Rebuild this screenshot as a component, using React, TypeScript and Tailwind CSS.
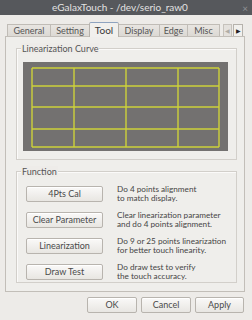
const tabs = [
  { name: "General", w: "w-[44px]" },
  { name: "Setting", w: "w-[40px]" },
  { name: "Tool", w: "w-[30px]" },
  { name: "Display", w: "w-[42px]" },
  { name: "Edge", w: "w-[29px]" },
  { name: "Misc", w: "w-[33px]" },
];

const functions = [
  { label: "4Pts Cal", text: ["Do 4 points alignment", "to match display."] },
  { label: "Clear Parameter", text: ["Clear linearization parameter", "and do 4 points alignment."] },
  { label: "Linearization", text: ["Do 9 or 25 points linearization", "for better touch linearity."] },
  { label: "Draw Test", text: ["Do draw test to verify", "the touch accuracy."] },
];

const xs = [9, 51, 103, 155, 196];
const ys = [6, 24, 45, 67, 85];

function Button({ children, className }: { children: React.ReactNode; className?: string }) {
  return (
    <div
      className={`flex items-center justify-center border border-[#b8b4ae] rounded-[2px] bg-gradient-to-b from-[#faf9f8] to-[#e8e6e2] text-[9px] text-[#4a4a4a] shadow-[inset_0_1px_0_#fff] ${className ?? ""}`}
    >
      {children}
    </div>
  );
}

function Group({ title, className, children }: { title: string; className?: string; children: React.ReactNode }) {
  return (
    <div className={`relative border border-[#d2cfca] shadow-[inset_1px_1px_0_#fbfaf9] ${className ?? ""}`}>
      <span className="absolute left-[4px] top-[-6px] px-[1px] bg-[#eeece9] text-[9px] leading-[11px] text-[#555]">
        {title}
      </span>
      {children}
    </div>
  );
}

export default function App() {
  return (
    <div className="w-[252px] h-[320px] bg-[#edebe8] flex flex-col font-['Lato',sans-serif] overflow-hidden">
      <div className="relative h-[15px] bg-[#56585c] flex items-center justify-center pr-[12px] text-[10px] text-[#e2e2e2]">
        eGalaxTouch - /dev/serio_raw0
        <span className="absolute right-[4px] top-[1px] text-[10px] text-[#8e9094]">×</span>
      </div>

      <div className="flex items-end h-[21px] pl-[7px]">
        {tabs.map((t) =>
          t.name === "Tool" ? (
            <div
              key={t.name}
              className={`${t.w} h-[15px] -ml-[1px] flex items-center justify-center border border-b-0 border-[#b6b2ac] border-t-[#8ea3bf] bg-[#f1f0ed] text-[10px] text-[#3a3a3a] rounded-t-[2px] -mb-[1px] z-10`}
            >
              {t.name}
            </div>
          ) : (
            <div
              key={t.name}
              className={`${t.w} h-[12px] -ml-[1px] first:ml-0 flex items-center justify-center border border-b-0 border-[#c0bcb6] bg-gradient-to-b from-[#e8e5e1] to-[#dcd9d4] text-[9px] text-[#555]`}
            >
              {t.name}
            </div>
          )
        )}
        <div className="ml-[3px] h-[12px] w-[9px] flex items-center justify-center border border-b-0 border-[#c6c2bc] bg-[#e4e1dd] text-[6px] text-[#b0aca6]">
          ◀
        </div>
        <div className="ml-[1px] h-[12px] w-[10px] flex items-center justify-center border border-b-0 border-[#b6b2ac] bg-[#f1f0ed] text-[6px] text-[#222]">
          ▶
        </div>
      </div>

      <div className="ml-[5px] w-[240px] h-[256px] border border-[#c2beb8] bg-[#efeeeb] flex flex-col pl-[10px] pt-[11px]">
        <Group title="Linearization Curve" className="w-[221px] h-[112px] pl-[6px] pt-[13px]">
          <svg width="205" height="89" className="block">
            <rect width="205" height="89" fill="#737170" />
            {xs.map((x) => (
              <line key={"x" + x} x1={x} y1={ys[0]} x2={x} y2={ys[4]} stroke="#cdd23a" strokeWidth="1.4" />
            ))}
            {ys.map((y) => (
              <line key={"y" + y} x1={xs[0]} y1={y} x2={xs[4]} y2={y} stroke="#cdd23a" strokeWidth="1.4" />
            ))}
          </svg>
        </Group>

        <Group title="Function" className="mt-[11px] w-[221px] h-[112px] pl-[9px] pt-[13px] flex flex-col gap-[8px]">
          {functions.map((f) => (
            <div key={f.label} className="flex items-center">
              <Button className="w-[77px] h-[16px] shrink-0">{f.label}</Button>
              <div className="ml-[14px] text-[8.2px] leading-[9px] text-[#454545]">
                {f.text.map((l) => (
                  <div key={l}>{l}</div>
                ))}
              </div>
            </div>
          ))}
        </Group>
      </div>

      <div className="flex justify-end gap-[4px] pr-[8px] mt-[5px]">
        <Button className="w-[50px] h-[16px]">OK</Button>
        <Button className="w-[50px] h-[16px]">Cancel</Button>
        <Button className="w-[49px] h-[16px]">Apply</Button>
      </div>
    </div>
  );
}
